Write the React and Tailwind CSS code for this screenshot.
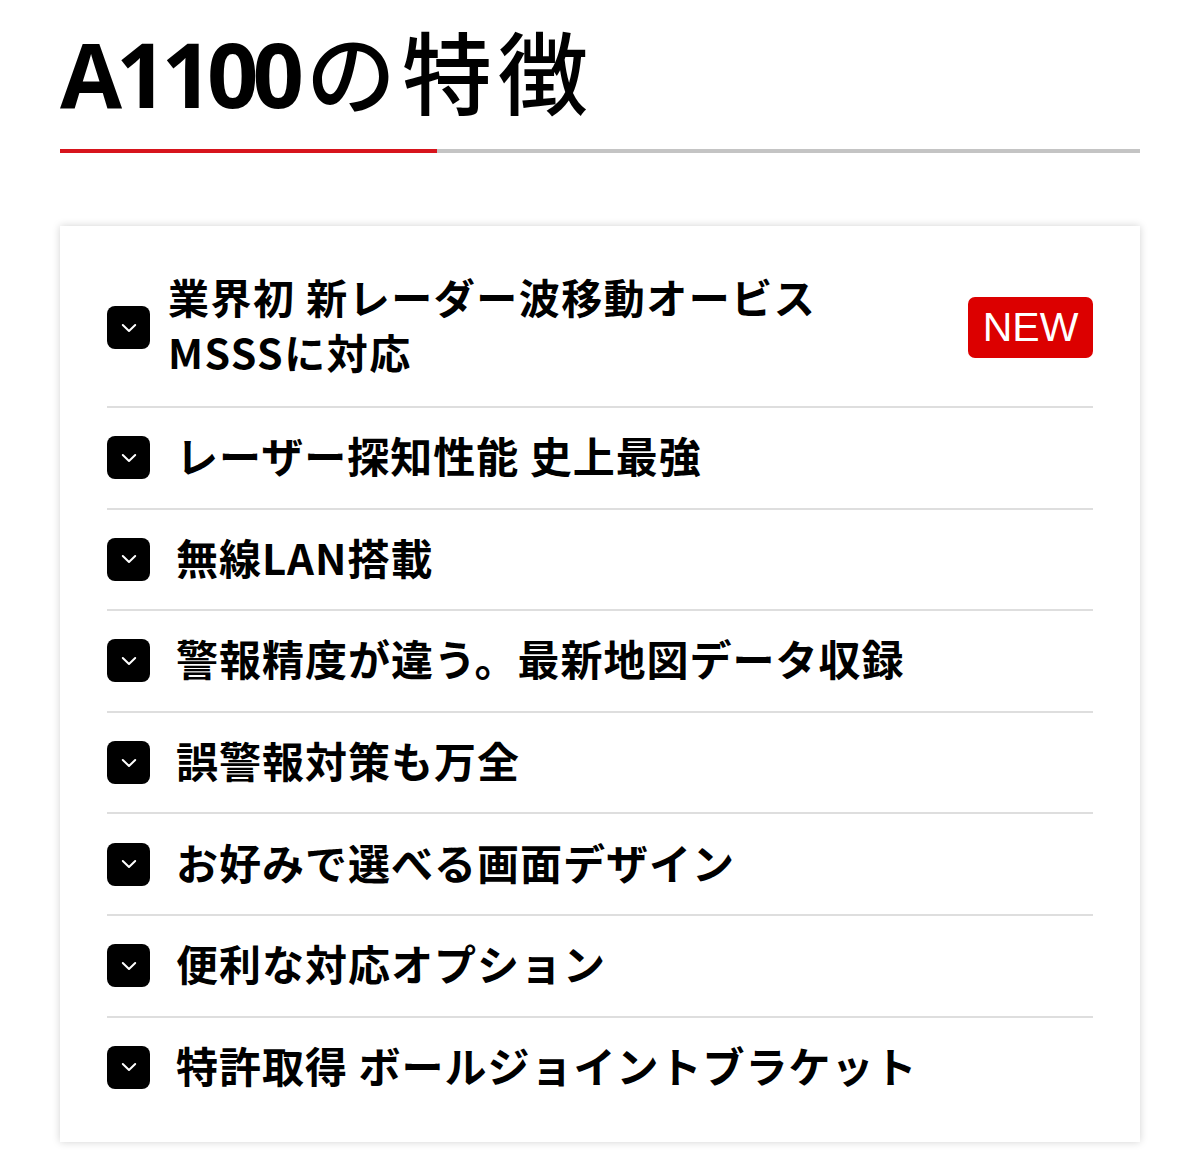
const items = [
  'レーザー探知性能 史上最強',
  '無線LAN搭載',
  '警報精度が違う。最新地図データ収録',
  '誤警報対策も万全',
  'お好みで選べる画面デザイン',
  '便利な対応オプション',
  '特許取得 ボールジョイントブラケット',
];

function Check() {
  return (
    <span className="flex h-[43px] w-[43px] shrink-0 items-center justify-center rounded-[8px] bg-black">
      <svg width="16" height="10" viewBox="0 0 16 10" fill="none">
        <path d="M1.8 2l6.2 6 6.2-6" stroke="white" strokeWidth="2" strokeLinecap="round" strokeLinejoin="round" />
      </svg>
    </span>
  );
}

export default function App() {
  return (
    <div
      className="min-h-[1161px] bg-white px-[60px] pt-[15px] text-black"
      style={{ fontFamily: '"Noto Sans CJK JP", "Noto Sans", sans-serif' }}
    >
      <h1 className="text-[90px] leading-[1.2]">
        <span
          className="font-bold tracking-[-6px]"
          style={{ fontFamily: '"Open Sans", "Noto Sans", sans-serif' }}
        >
          A1100
        </span>
        <span className="ml-[8px] font-medium tracking-[6px]">の特徴</span>
      </h1>
      <div className="mt-[22px] flex h-[4px]">
        <div className="w-[377px] bg-[#d7141c]" />
        <div className="flex-1 bg-[#c4c4c4]" />
      </div>

      <div className="mt-[73px] bg-white px-[47px] pt-[23px] pb-[25px] shadow-[0_0_8px_rgba(0,0,0,0.18)]">
        <div className="flex items-center py-[19.5px]">
          <Check />
          <p className="ml-[18px] flex-1 pb-[8px] text-[41px] font-semibold leading-[55px] tracking-[1.5px]">
            業界初 新レーダー波移動オービス
            <br />
            MSSSに対応
          </p>
          <span
            className="flex h-[61px] w-[125px] items-center justify-center rounded-[7px] bg-[#dc0000] text-[41px] text-white"
            style={{ fontFamily: '"Liberation Sans", Arial, sans-serif' }}
          >
            NEW
          </span>
        </div>
        {items.map((t) => (
          <div key={t} className="flex items-center border-t-2 border-[#dedede] py-[19.3px]">
            <Check />
            <p className="ml-[26px] pb-[6px] text-[42px] font-semibold leading-[55px] tracking-[1px]">{t}</p>
          </div>
        ))}
      </div>
    </div>
  );
}
